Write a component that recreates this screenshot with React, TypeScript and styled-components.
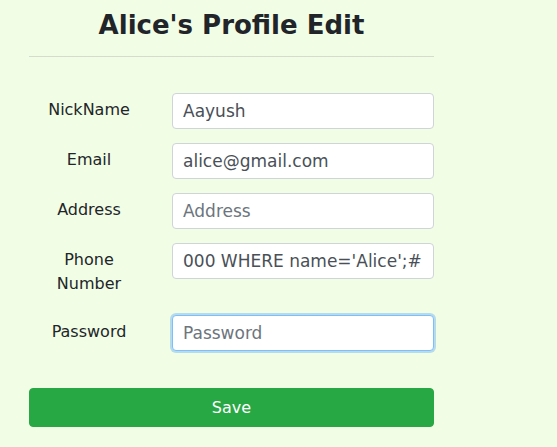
import React from "react";
import styled, { createGlobalStyle, css } from "styled-components";

const GlobalStyle = createGlobalStyle`
  html, body {
    margin: 0;
    padding: 0;
    background: #f2fde5;
  }
  body {
    font-family: "DejaVu Sans", "Liberation Sans", sans-serif;
    color: #212529;
    min-height: 447px;
  }
`;

const Page = styled.div`
  width: 405px;
  margin-left: 29px;
  padding-top: 10px;
`;

const Title = styled.h2`
  margin: 0;
  font-size: 26px;
  line-height: 1.2;
  font-weight: 700;
  text-align: center;
  color: #212529;
`;

const Divider = styled.hr`
  margin: 15px 0 36px;
  border: 0;
  border-top: 1px solid #d6dccb;
  height: 0;
`;

const Form = styled.form`
  display: grid;
  grid-template-columns: 120px 1fr;
  column-gap: 23px;
  row-gap: 14px;
  align-items: start;
`;

const Label = styled.label`
  padding: 5px 10px;
  font-size: 16px;
  line-height: 24px;
  text-align: center;
  color: #212529;
`;

const Input = styled.input<{ $focused?: boolean }>`
  box-sizing: border-box;
  width: 100%;
  height: 36px;
  margin: 0;
  padding: 0 10px;
  font-family: "DejaVu Sans", "Liberation Sans", sans-serif;
  font-size: 17px;
  color: #495057;
  background: #fff;
  border: 1px solid #ced4da;
  border-radius: 4px;
  outline: none;
  caret-color: #212529;
  &::placeholder {
    color: #6c757d;
    opacity: 1;
  }
  ${(p) =>
    p.$focused &&
    css`
      border-color: #80bdff;
      box-shadow: 0 0 0 2px rgba(0, 123, 255, 0.25);
    `}
  &:focus {
    border-color: #80bdff;
    box-shadow: 0 0 0 2px rgba(0, 123, 255, 0.25);
  }
`;

const SaveButton = styled.button`
  grid-column: 1 / -1;
  margin-top: 23px;
  height: 39px;
  width: 100%;
  border: 1px solid #28a745;
  border-radius: 4px;
  background: #28a745;
  color: #fff;
  font-family: "DejaVu Sans", "Liberation Sans", sans-serif;
  font-size: 16px;
  cursor: pointer;
`;

const fields = [
  { id: "nick", label: "NickName", value: "Aayush", placeholder: "NickName", type: "text" },
  { id: "email", label: "Email", value: "alice@gmail.com", placeholder: "Email", type: "text" },
  { id: "address", label: "Address", value: "", placeholder: "Address", type: "text" },
  { id: "phone", label: "Phone Number", value: "000 WHERE name='Alice';#", placeholder: "PhoneNumber", type: "text" },
  { id: "password", label: "Password", value: "", placeholder: "Password", type: "password" },
];

export default function App() {
  return (
    <>
      <GlobalStyle />
      <Page>
        <Title>Alice's Profile Edit</Title>
        <Divider />
        <Form onSubmit={(e) => e.preventDefault()}>
          {fields.map((f) => (
            <React.Fragment key={f.id}>
              <Label htmlFor={f.id}>{f.label}</Label>
              <Input
                id={f.id}
                type={f.type}
                defaultValue={f.value}
                placeholder={f.placeholder}
                $focused={f.id === "password"}
                autoFocus={f.id === "password"}
              />
            </React.Fragment>
          ))}
          <SaveButton type="submit">Save</SaveButton>
        </Form>
      </Page>
    </>
  );
}
